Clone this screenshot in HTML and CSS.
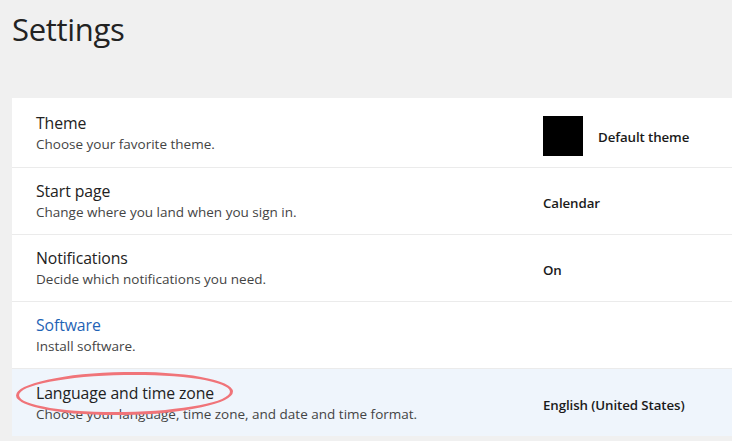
FILE: index.html
```html
<!DOCTYPE html>
<html lang="en">
<head>
<meta charset="utf-8">
<title>Settings</title>
<link rel="stylesheet" href="styles.css">
</head>
<body>
<h1 class="page-title">Settings</h1>
<div class="panel">
  <div class="row row-theme">
    <div class="info">
      <div class="label">Theme</div>
      <div class="desc">Choose your favorite theme.</div>
    </div>
    <div class="value value-theme">
      <span class="swatch"></span>
      <span class="theme-name">Default theme</span>
    </div>
  </div>
  <div class="row">
    <div class="info">
      <div class="label">Start page</div>
      <div class="desc">Change where you land when you sign in.</div>
    </div>
    <div class="value">Calendar</div>
  </div>
  <div class="row">
    <div class="info">
      <div class="label">Notifications</div>
      <div class="desc">Decide which notifications you need.</div>
    </div>
    <div class="value">On</div>
  </div>
  <div class="row">
    <div class="info">
      <div class="label link">Software</div>
      <div class="desc">Install software.</div>
    </div>
    <div class="value"></div>
  </div>
  <div class="row row-active">
    <div class="info">
      <div class="label">Language and time zone</div>
      <div class="desc">Choose your language, time zone, and date and time format.</div>
    </div>
    <div class="value value-low">English (United States)</div>
    <span class="annot"></span>
  </div>
</div>
</body>
</html>
```
FILE: styles.css
```css
html, body {
  margin: 0;
  padding: 0;
}
body {
  background: #f0f0f0;
  font-family: "Open Sans", "Noto Sans", sans-serif;
  color: #222;
  width: 732px;
  height: 441px;
  overflow: hidden;
}
.page-title {
  margin: 0;
  padding: 8px 0 0 12px;
  height: 98px;
  box-sizing: border-box;
  font-size: 31px;
  font-weight: 400;
  line-height: 42px;
  color: #222;
  letter-spacing: -0.3px;
}
.panel {
  margin-left: 12px;
  background: #fff;
}
.row {
  position: relative;
  display: grid;
  grid-template-columns: 531px 1fr;
  align-items: center;
  height: 67px;
  border-bottom: 1px solid #ebebeb;
  box-sizing: border-box;
}
.row-theme {
  height: 70px;
}
.row-active {
  background: #eff5fc;
  border-bottom: none;
}
.info {
  padding-left: 24px;
  padding-top: 1px;
}
.label {
  font-size: 15.8px;
  line-height: 21px;
  color: #222;
  letter-spacing: -0.1px;
}
.label.link {
  color: #1f63b5;
}
.desc {
  font-size: 13.5px;
  line-height: 20px;
  color: #444;
  letter-spacing: 0;
}
.value {
  font-size: 13.3px;
  font-weight: 600;
  color: #1a1a1a;
  letter-spacing: -0.1px;
  padding-top: 4px;
}
.value-low {
  padding-top: 5px;
}
.value-theme {
  display: flex;
  align-items: center;
  gap: 15px;
  padding-top: 6px;
}
.theme-name {
  padding-top: 2px;
}
.swatch {
  width: 40px;
  height: 40px;
  background: #000;
  display: block;
}
.annot {
  position: absolute;
  left: 4px;
  top: 3px;
  width: 217px;
  height: 43px;
  border: 3px solid #f07479;
  border-radius: 50%;
  box-sizing: border-box;
  transform: rotate(-1deg);
  pointer-events: none;
}
```
